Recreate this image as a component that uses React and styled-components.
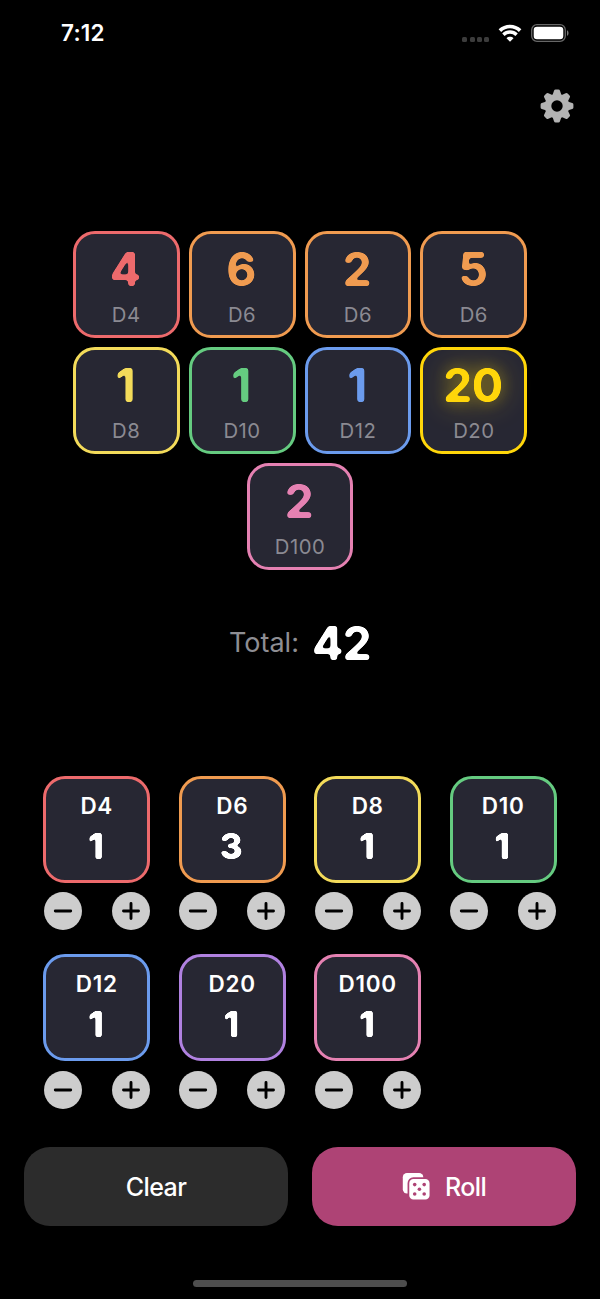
import React, { useState } from "react";
import styled, { createGlobalStyle, css } from "styled-components";

const GlobalStyle = createGlobalStyle`
  * {
    box-sizing: border-box;
  }
  body {
    margin: 0;
    background: #000;
    font-family: Inter, "Liberation Sans", sans-serif;
  }
  button {
    font-family: inherit;
    border: 0;
    padding: 0;
    cursor: pointer;
  }
`;

const Screen = styled.div`
  width: 600px;
  height: 1299px;
  display: flex;
  flex-direction: column;
  background: #000;
  color: #fff;
  overflow: hidden;
`;

const StatusBar = styled.header`
  height: 66px;
  flex: none;
  display: flex;
  justify-content: space-between;
  align-items: center;
  padding: 0 31px 0 61px;
`;

const Time = styled.span`
  font-size: 22.5px;
  font-weight: 600;
  line-height: 28px;
  letter-spacing: 0.2px;
`;

const StatusIcons = styled.div`
  display: flex;
  align-items: center;
  gap: 9px;
`;

const Signal = styled.div`
  display: flex;
  gap: 2.2px;
  padding-top: 12px;
  span {
    width: 5px;
    height: 5px;
    border-radius: 1.5px;
    background: #3c3c3c;
  }
`;

const Toolbar = styled.div`
  height: 80px;
  flex: none;
  display: flex;
  justify-content: flex-end;
  align-items: center;
  padding-right: 26px;
`;

const SettingsButton = styled.button`
  display: flex;
  background: none;
`;

const Results = styled.section`
  display: flex;
  flex-wrap: wrap;
  justify-content: center;
  gap: 9px;
  width: 455px;
  margin: 85px auto 0;
`;

const dieCard = css`
  width: 106.9px;
  height: 106.9px;
  display: flex;
  flex-direction: column;
  align-items: center;
  border: 3px solid ${({ $color }) => $color};
  border-radius: 22px;
  background: #272733;
`;

const ResultCard = styled.div`
  ${dieCard}
  padding-top: 8px;
`;

const ResultValue = styled.span`
  font-size: 46.5px;
  font-weight: 700;
  line-height: 54px;
  letter-spacing: -0.5px;
  margin-right: 2px;
  color: ${({ $color }) => $color};
  filter: url(#soft-corners)
    ${({ $glow }) =>
      $glow &&
      "drop-shadow(0 0 7px rgba(255, 214, 10, 0.28)) drop-shadow(0 0 14px rgba(255, 214, 10, 0.42))"};
`;

const ResultLabel = styled.span`
  font-size: 20.3px;
  line-height: 24px;
  margin-top: 7px;
  letter-spacing: 0.5px;
  color: #8b8a92;
`;

const Total = styled.div`
  display: flex;
  justify-content: center;
  align-items: center;
  gap: 13px;
  height: 60px;
  margin-top: 43px;
`;

const TotalLabel = styled.span`
  font-size: 27px;
  color: #8e8e93;
`;

const TotalValue = styled.span`
  font-size: 46.5px;
  font-weight: 700;
  letter-spacing: -0.8px;
  filter: url(#soft-corners);
`;

const Pool = styled.section`
  display: grid;
  grid-template-columns: repeat(4, 106.9px);
  column-gap: 28.6px;
  row-gap: 24.4px;
  margin: 103px 0 0 43.3px;
`;

const PoolCard = styled.div`
  ${dieCard}
  padding-top: 13px;
`;

const PoolName = styled.span`
  font-size: 22.5px;
  font-weight: 600;
  line-height: 28px;
  letter-spacing: 0.7px;
`;

const PoolCount = styled.span`
  font-size: 35.5px;
  font-weight: 800;
  line-height: 40px;
  margin-top: 7px;
  margin-right: 2px;
  filter: url(#soft-corners-small);
`;

const Stepper = styled.div`
  display: flex;
  justify-content: space-between;
  padding: 0 0.6px;
  margin-top: 9.4px;
`;

const StepButton = styled.button`
  width: 38px;
  height: 38px;
  border-radius: 50%;
  background: #cdcdcd;
  display: flex;
  justify-content: center;
  align-items: center;
`;

const Actions = styled.div`
  display: grid;
  grid-template-columns: 1fr 1fr;
  gap: 24px;
  padding: 0 24px;
  margin-top: 38px;
`;

const ActionButton = styled.button`
  height: 79px;
  border-radius: 26px;
  background: ${({ $primary }) => ($primary ? "#ae4375" : "#2c2c2c")};
  color: #fff;
  font-size: 25px;
  font-weight: 500;
  letter-spacing: -0.6px;
  padding-top: 1px;
  display: flex;
  justify-content: center;
  align-items: center;
  gap: 15px;
`;

const HomeIndicator = styled.div`
  width: 214px;
  height: 7px;
  border-radius: 4px;
  background: #4e4e4e;
  margin: auto auto 12px;
`;

const FilterDefs = styled.svg`
  position: absolute;
`;

// Blurs and then re-sharpens the alpha, which rounds off the digits' corners
const SoftCorners = ({ id, radius }) => (
  <FilterDefs width="0" height="0" aria-hidden="true">
    <filter id={id} x="-20%" y="-20%" width="140%" height="140%" colorInterpolationFilters="sRGB">
      <feGaussianBlur stdDeviation={radius} />
      <feComponentTransfer>
        <feFuncA type="linear" slope="5" intercept="-1.9" />
      </feComponentTransfer>
    </filter>
  </FilterDefs>
);

const WifiIcon = () => (
  <svg width="24" height="18" viewBox="0 0 24 18" fill="none">
    <path d="M1.9 6.6C7.6 1.1 16.4 1.1 22.1 6.6" stroke="#fff" strokeWidth="3.7" />
    <path d="M5.4 10.7c3.7-3.6 9.5-3.6 13.2 0" stroke="#fff" strokeWidth="3.4" />
    <path d="M12 17.7l-3.5-3.5c1.9-1.8 5.1-1.8 7 0z" fill="#fff" />
  </svg>
);

const BatteryIcon = () => (
  <svg width="38" height="18" viewBox="0 0 38 18">
    <rect x="0.7" y="0.7" width="33.6" height="16.6" rx="5.2" fill="none" stroke="#676767" strokeWidth="1.3" />
    <rect x="2.7" y="2.7" width="29.6" height="12.6" rx="3.3" fill="#fff" />
    <path d="M36 6.2c2 .8 2 4.8 0 5.6z" fill="#777" />
  </svg>
);

const GearIcon = () => (
  <svg width="34" height="34" viewBox="-17 -17 34 34">
    <g fill="#b3b3b3">
      {[0, 45, 90, 135, 180, 225, 270, 315].map((angle) => (
        <path
          key={angle}
          transform={`rotate(${angle})`}
          d="M-4.6-10.5L-3-15.2Q-2.6-16.4-1.4-16.4H1.4Q2.6-16.4 3-15.2L4.6-10.5z"
        />
      ))}
    </g>
    <circle r="9" fill="none" stroke="#b3b3b3" strokeWidth="6.6" />
  </svg>
);

const StepIcon = ({ plus }) => (
  <svg width="20" height="20" viewBox="0 0 20 20" stroke="#000" strokeWidth="2.9" strokeLinecap="round">
    <path d={plus ? "M2.5 10h15M10 2.5v15" : "M2.3 10h15.4"} />
  </svg>
);

const DiceIcon = () => (
  <svg width="28" height="28" viewBox="0 0 28 28">
    <rect x="0.8" y="0" width="20.5" height="20.5" rx="4.2" fill="#fff" />
    <rect x="6.4" y="5.2" width="22" height="22.2" rx="5" fill="#fff" stroke="#ae4375" strokeWidth="1.7" />
    <g fill="#ae4375">
      <circle cx="12.7" cy="11.6" r="1.8" />
      <circle cx="22.2" cy="11.6" r="1.8" />
      <circle cx="17.4" cy="16.3" r="1.8" />
      <circle cx="12.7" cy="21" r="1.8" />
      <circle cx="22.2" cy="21" r="1.8" />
    </g>
  </svg>
);

const COLORS = {
  D4: "#ed6a6c",
  D6: "#f09b50",
  D8: "#f3db5a",
  D10: "#65cb80",
  D12: "#6b9bed",
  D20: "#b081e0",
  D100: "#e581b2",
};

const CRITICAL = "#ffd60a";

const initialRolls = [
  { die: "D4", value: 4 },
  { die: "D6", value: 6 },
  { die: "D6", value: 2 },
  { die: "D6", value: 5 },
  { die: "D8", value: 1 },
  { die: "D10", value: 1 },
  { die: "D12", value: 1 },
  { die: "D20", value: 20 },
  { die: "D100", value: 2 },
];

const initialPool = { D4: 1, D6: 3, D8: 1, D10: 1, D12: 1, D20: 1, D100: 1 };

const App = () => {
  const [rolls, setRolls] = useState(initialRolls);
  const [pool, setPool] = useState(initialPool);

  const change = (die, step) =>
    setPool({ ...pool, [die]: Math.max(0, pool[die] + step) });

  const clear = () => {
    setRolls([]);
    setPool(Object.fromEntries(Object.keys(pool).map((die) => [die, 0])));
  };

  const roll = () =>
    setRolls(
      Object.entries(pool).flatMap(([die, count]) =>
        Array.from({ length: count }, () => ({
          die,
          value: 1 + Math.floor(Math.random() * Number(die.slice(1))),
        }))
      )
    );

  return (
    <Screen>
      <GlobalStyle />
      <SoftCorners id="soft-corners" radius={1.6} />
      <SoftCorners id="soft-corners-small" radius={1.3} />
      <StatusBar>
        <Time>7:12</Time>
        <StatusIcons>
          <Signal>
            <span />
            <span />
            <span />
            <span />
          </Signal>
          <WifiIcon />
          <BatteryIcon />
        </StatusIcons>
      </StatusBar>
      <Toolbar>
        <SettingsButton aria-label="Settings">
          <GearIcon />
        </SettingsButton>
      </Toolbar>
      <Results>
        {rolls.map(({ die, value }, i) => {
          const critical = die === "D20" && value === 20;
          const color = critical ? CRITICAL : COLORS[die];
          return (
            <ResultCard key={i} $color={color}>
              <ResultValue $color={color} $glow={critical}>
                {value}
              </ResultValue>
              <ResultLabel>{die}</ResultLabel>
            </ResultCard>
          );
        })}
      </Results>
      <Total>
        <TotalLabel>Total:</TotalLabel>
        <TotalValue>{rolls.reduce((sum, { value }) => sum + value, 0)}</TotalValue>
      </Total>
      <Pool>
        {Object.entries(pool).map(([die, count]) => (
          <div key={die}>
            <PoolCard $color={COLORS[die]}>
              <PoolName>{die}</PoolName>
              <PoolCount>{count}</PoolCount>
            </PoolCard>
            <Stepper>
              <StepButton aria-label={`Remove ${die}`} onClick={() => change(die, -1)}>
                <StepIcon />
              </StepButton>
              <StepButton aria-label={`Add ${die}`} onClick={() => change(die, 1)}>
                <StepIcon plus />
              </StepButton>
            </Stepper>
          </div>
        ))}
      </Pool>
      <Actions>
        <ActionButton onClick={clear}>Clear</ActionButton>
        <ActionButton $primary onClick={roll}>
          <DiceIcon />
          Roll
        </ActionButton>
      </Actions>
      <HomeIndicator />
    </Screen>
  );
};

export default App;
